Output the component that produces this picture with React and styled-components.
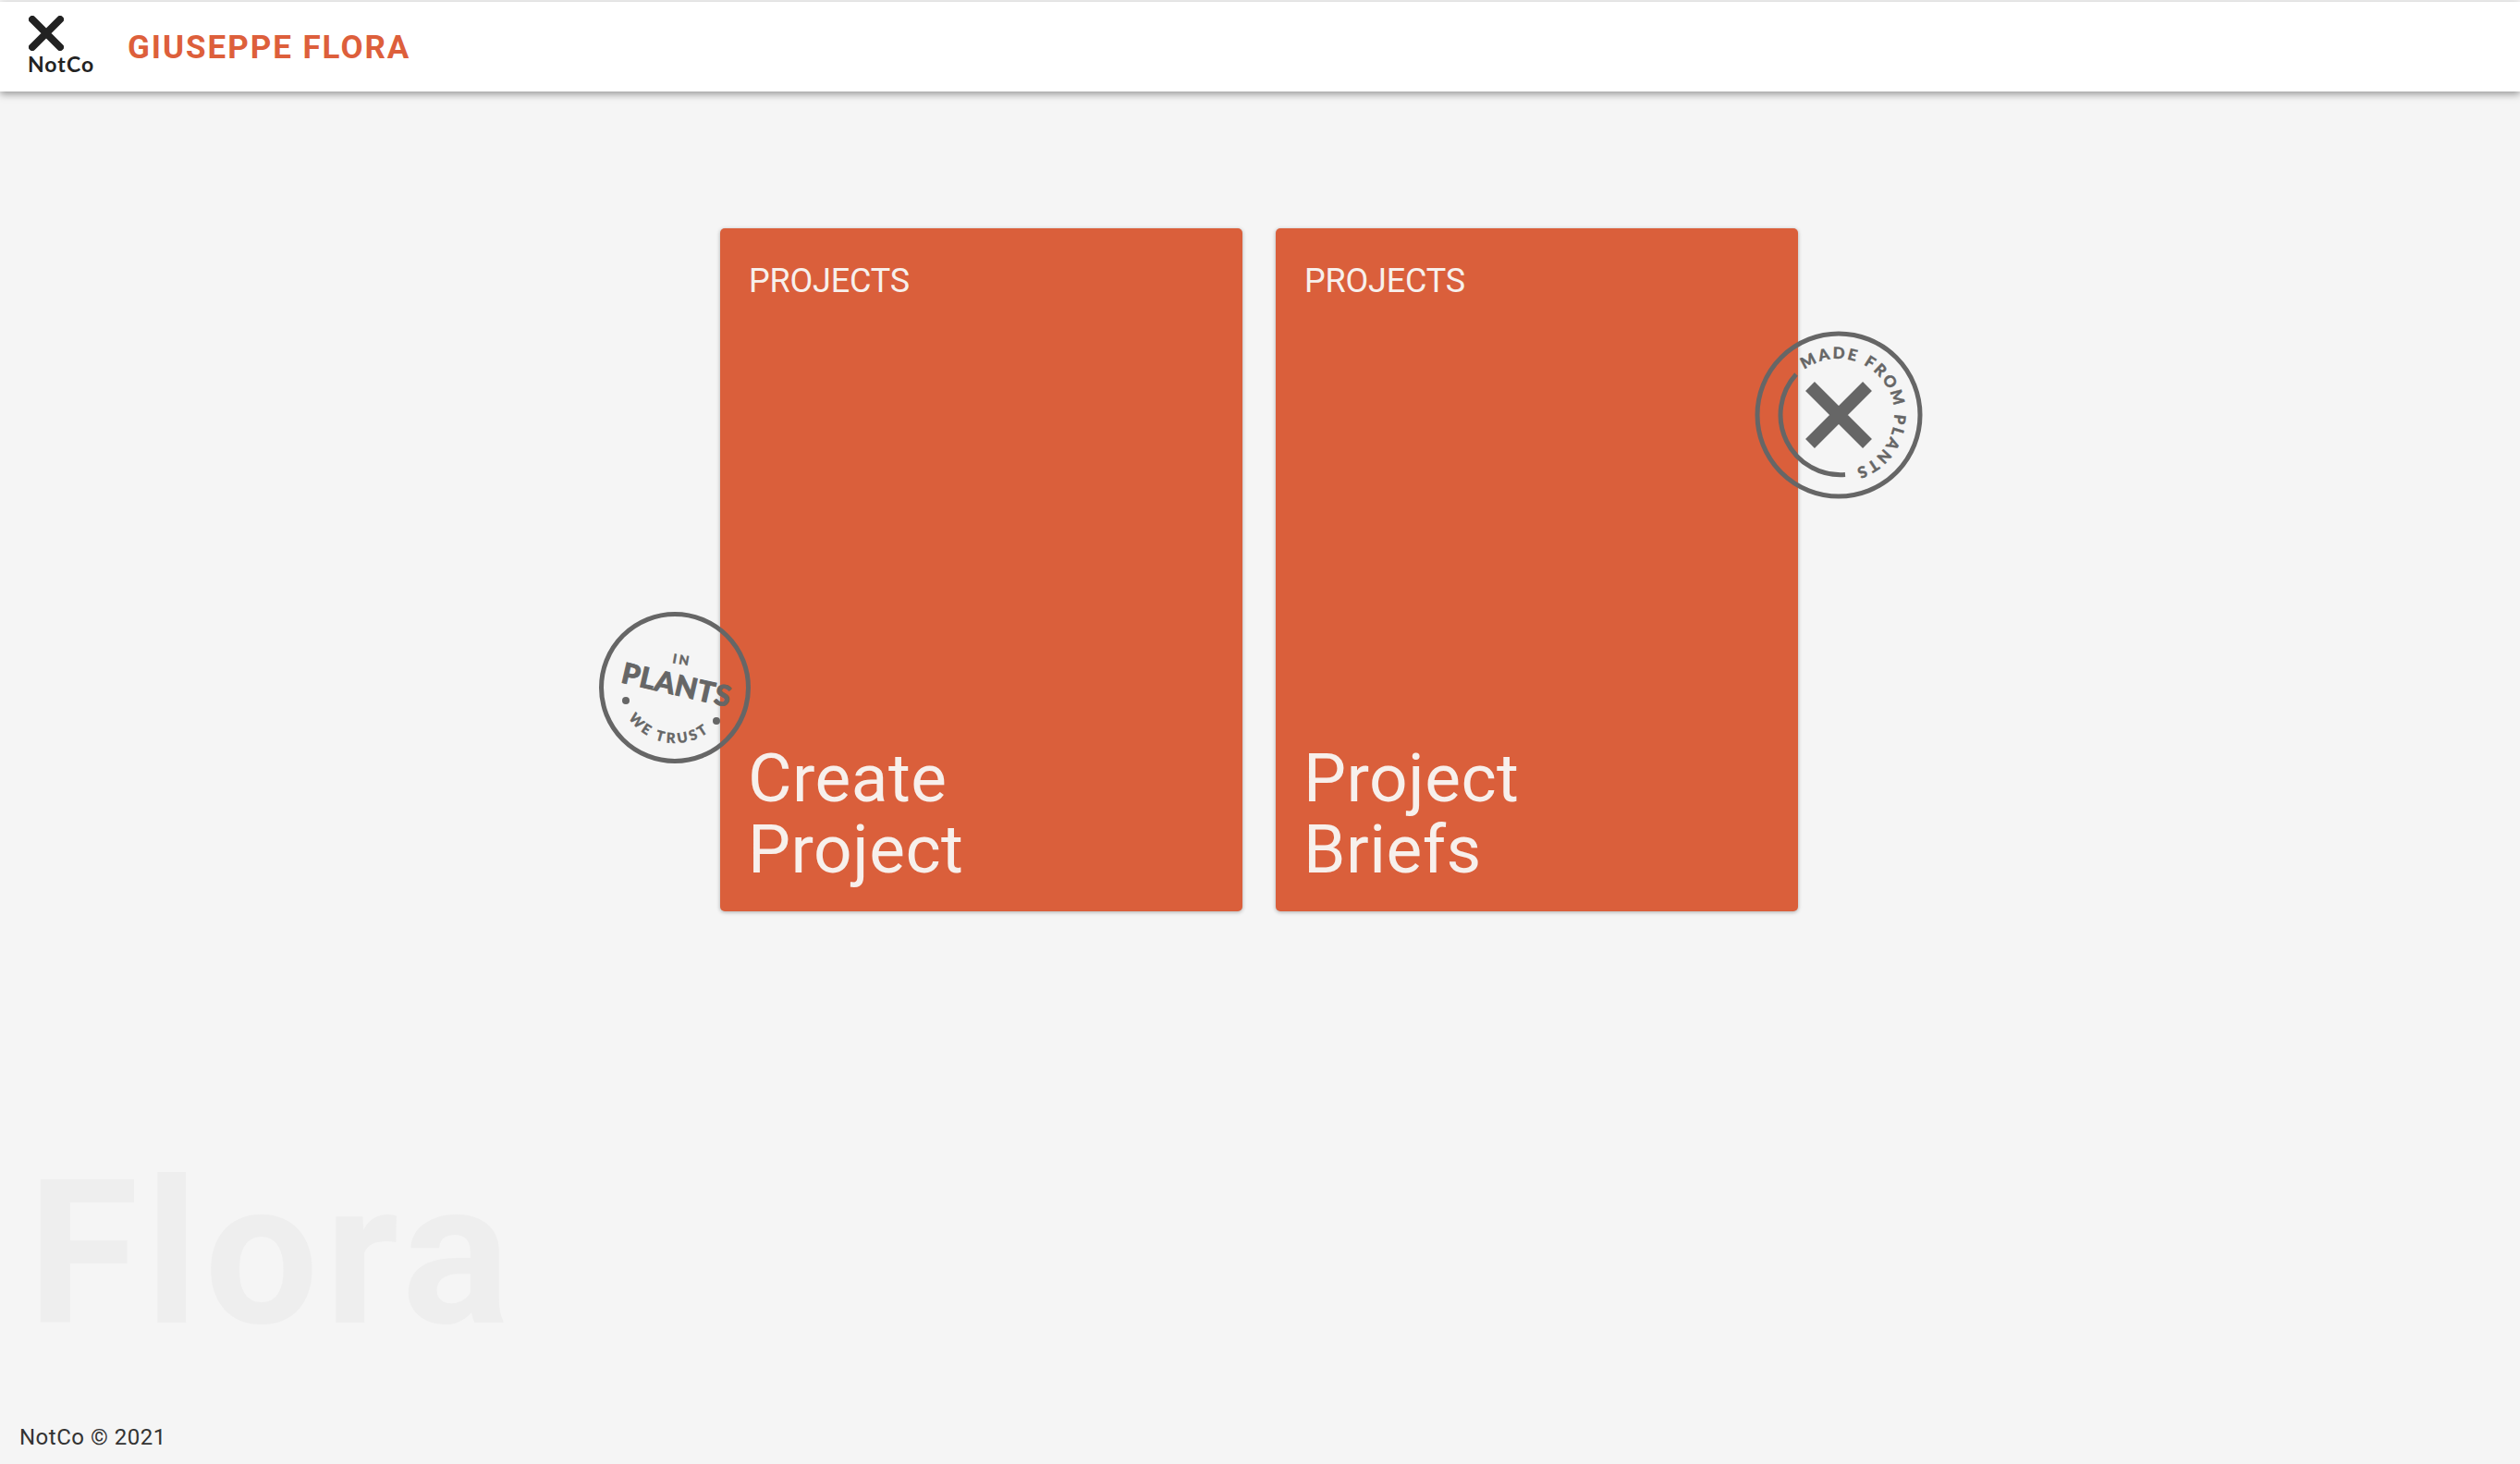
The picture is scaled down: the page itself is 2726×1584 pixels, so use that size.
import React from "react";
import styled, { createGlobalStyle } from "styled-components";

const Global = createGlobalStyle`
  html, body { margin: 0; padding: 0; background: #f5f5f5; }
  body { font-family: Roboto, "Liberation Sans", sans-serif; }
`;

const Page = styled.div`
  height: 1584px;
  display: flex;
  flex-direction: column;
  overflow: hidden;
  padding-top: 2px;
  box-sizing: border-box;
  background: #f5f5f5;
`;

const Header = styled.header`
  height: 97px;
  flex: none;
  display: flex;
  align-items: center;
  background: #fff;
  box-shadow: 0 3px 8px rgba(0, 0, 0, 0.38);
  padding-left: 30px;
`;

const Logo = styled.div`
  width: 74px;
  margin-right: 34px;
  display: flex;
  flex-direction: column;
  align-items: flex-start;
  svg { margin-left: 1px; display: block; margin-top: -3px; }
`;

const LogoText = styled.span`
  font-family: Lato, sans-serif;
  font-weight: 700;
  font-size: 23px;
  line-height: 23px;
  letter-spacing: 1px;
  color: #222;
  margin-top: 3px;
`;

const UserName = styled.h1`
  margin: 2px 0 0;
  font-size: 35px;
  line-height: 40px;
  font-weight: 700;
  letter-spacing: 1.95px;
  color: #dd5f3b;
`;

const Cards = styled.main`
  display: flex;
  gap: 36px;
  padding: 148px 0 0 779px;
`;

const Card = styled.div`
  position: relative;
  width: 565px;
  height: 739px;
  box-sizing: border-box;
  padding: 36px 31px 29px;
  display: flex;
  flex-direction: column;
  justify-content: space-between;
  background: #da5f3b;
  border-radius: 5px;
  box-shadow: 0 1px 4px rgba(0, 0, 0, 0.3);
  color: #f7f0ec;
`;

const Kicker = styled.div`
  font-size: 36px;
  line-height: 42px;
  font-weight: 400;
  letter-spacing: -0.2px;
`;

const Title = styled.div`
  font-size: 73px;
  line-height: 76.5px;
  font-weight: 400;
  letter-spacing: 0.5px;
  margin-left: -1px;
`;

const Stamp = styled.svg`
  position: absolute;
  left: ${(p) => p.$left}px;
  top: ${(p) => p.$top}px;
  overflow: visible;
`;

const StampText = styled.text`
  font-family: Lato, sans-serif;
  font-weight: 900;
  fill: #666;
  stroke: #666;
  stroke-width: ${(p) => p.$weight || 0.4}px;
`;

const Watermark = styled.div`
  margin: 262px 0 0 30px;
  font-size: 218px;
  line-height: 218px;
  font-weight: 700;
  letter-spacing: 7px;
  color: #eeeeee;
`;

const Footer = styled.footer`
  margin: auto 0 0 21px;
  padding-bottom: 15px;
  font-size: 24px;
  line-height: 28px;
  letter-spacing: 0.5px;
  color: #333;
`;

const TrustStamp = () => (
  <Stamp $left={-132} $top={414} width="166" height="166" viewBox="0 0 166 166">
    <defs>
      <path id="weTrust" d="M 32 114 A 60 60 0 0 0 123 128" />
    </defs>
    <circle cx="83" cy="83" r="79.5" fill="none" stroke="#666" strokeWidth="5" />
    <StampText x="91" y="58" fontSize="14" letterSpacing="2.5" textAnchor="middle" transform="rotate(10 91 52)">IN</StampText>
    <StampText x="85" y="91" fontSize="31" letterSpacing="0.6" textAnchor="middle" transform="rotate(13 85 80)" $weight={0.9}>PLANTS</StampText>
    <StampText fontSize="15" letterSpacing="3.2">
      <textPath href="#weTrust" startOffset="50%" textAnchor="middle">WE TRUST</textPath>
    </StampText>
    <circle cx="30" cy="97" r="4" fill="#666" />
    <circle cx="128" cy="119" r="4" fill="#666" />
  </Stamp>
);

const PlantsStamp = () => (
  <Stamp $left={518} $top={111} width="182" height="182" viewBox="0 0 182 182">
    <defs>
      <path id="madeFrom" d="M 54 42 A 61 61 0 1 1 106 150" />
    </defs>
    <circle cx="91" cy="91" r="88" fill="none" stroke="#666" strokeWidth="5" />
    <path d="M 45 47 A 65 65 0 0 0 98 155.6" fill="none" stroke="#666" strokeWidth="5" />
    <path d="M 60 60 L 122 122 M 122 60 L 60 122" stroke="#666" strokeWidth="14" />
    <StampText fontSize="17" letterSpacing="2.4">
      <textPath href="#madeFrom">MADE FROM PLANTS</textPath>
    </StampText>
  </Stamp>
);

export default function App() {
  return (
    <Page>
      <Global />
      <Header>
        <Logo>
          <svg width="38" height="38" viewBox="0 0 38 38">
            <path d="M 4 4 L 34 34 M 34 4 L 4 34" stroke="#222" strokeWidth="8" strokeLinecap="round" />
          </svg>
          <LogoText>NotCo</LogoText>
        </Logo>
        <UserName>GIUSEPPE FLORA</UserName>
      </Header>
      <Cards>
        <Card>
          <Kicker>PROJECTS</Kicker>
          <Title>Create<br />Project</Title>
          <TrustStamp />
        </Card>
        <Card>
          <Kicker>PROJECTS</Kicker>
          <Title>Project<br />Briefs</Title>
          <PlantsStamp />
        </Card>
      </Cards>
      <Watermark>Flora</Watermark>
      <Footer>NotCo © 2021</Footer>
    </Page>
  );
}
